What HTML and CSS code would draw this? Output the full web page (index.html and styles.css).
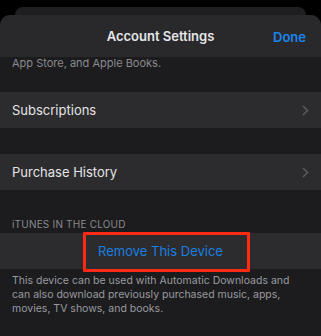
FILE: index.html
```html
<!DOCTYPE html>
<html>
<head>
<meta charset="utf-8">
<link rel="stylesheet" href="styles.css">
</head>
<body>
<div class="back-card"></div>
<div class="sheet">
  <div class="header">
    <span class="title">Account Settings</span>
    <span class="done">Done</span>
  </div>
  <div class="content">
    <p class="intro">App Store, and Apple Books.</p>
    <div class="row first">
      <span class="label">Subscriptions</span>
      <svg class="chev" width="7" height="11" viewBox="0 0 7 11"><path d="M1 1l4.5 4.5L1 10" fill="none" stroke="#5a5a5e" stroke-width="1.6"/></svg>
    </div>
    <div class="row second">
      <span class="label">Purchase History</span>
      <svg class="chev" width="7" height="11" viewBox="0 0 7 11"><path d="M1 1l4.5 4.5L1 10" fill="none" stroke="#5a5a5e" stroke-width="1.6"/></svg>
    </div>
    <div class="section-head">iTUNES IN THE CLOUD</div>
    <div class="row action">
      <span class="remove">Remove This Device</span>
      <span class="highlight"></span>
    </div>
    <p class="foot">This device can be used with Automatic Downloads and can also download previously purchased music, apps, movies, TV shows, and books.</p>
  </div>
</div>
</body>
</html>
```
FILE: styles.css
```css
html, body {
  margin: 0;
  padding: 0;
  background: #000;
  width: 321px;
  height: 336px;
  overflow: hidden;
  font-family: "Inter", "Liberation Sans", sans-serif;
}
.back-card {
  margin: 7px 15px 0;
  height: 8px;
  background: #1f1f21;
  border-radius: 10px 10px 0 0;
}
.sheet {
  background: #1c1c1e;
  border-radius: 10px 10px 0 0;
  height: 321px;
  overflow: hidden;
}
.header {
  height: 42px;
  background: #29292b;
  display: flex;
  align-items: center;
  justify-content: center;
  position: relative;
}
.title {
  color: #e6e6e8;
  font-size: 13px;
  font-weight: 600;
}
.done {
  position: absolute;
  right: 15px;
  top: 14px;
  color: #1a84f0;
  font-size: 13px;
  font-weight: 600;
}
.content {
  display: flex;
  flex-direction: column;
}
.intro {
  margin: 0;
  padding: 0 12px;
  height: 12px;
  line-height: 12px;
  font-size: 11px;
  color: #8a8a8e;
  margin-top: 0;
}
.row {
  height: 36px;
  background: #2c2c2e;
  display: flex;
  align-items: center;
  padding: 0 12px;
  position: relative;
}
.row.first { margin-top: 23px; }
.row.second { margin-top: 26px; }
.label {
  flex: 1;
  color: #e4e4e6;
  font-size: 13px;
}
.chev { margin-right: 0; }
.section-head {
  margin-top: 25px;
  padding: 3px 12px 0;
  height: 15px;
  font-size: 10px;
  color: #8a8a8e;
  letter-spacing: 0.2px;
}
.action {
  justify-content: center;
}
.remove {
  color: #1a7fe0;
  font-size: 13px;
}
.highlight {
  position: absolute;
  left: 83px;
  top: -1px;
  width: 161px;
  height: 34px;
  border: 3px solid #ff2a12;
  border-radius: 1px;
}
.foot {
  margin: 5px 0 0;
  padding: 0 12px;
  font-size: 10.5px;
  line-height: 14px;
  color: #9a9a9e;
}
```
